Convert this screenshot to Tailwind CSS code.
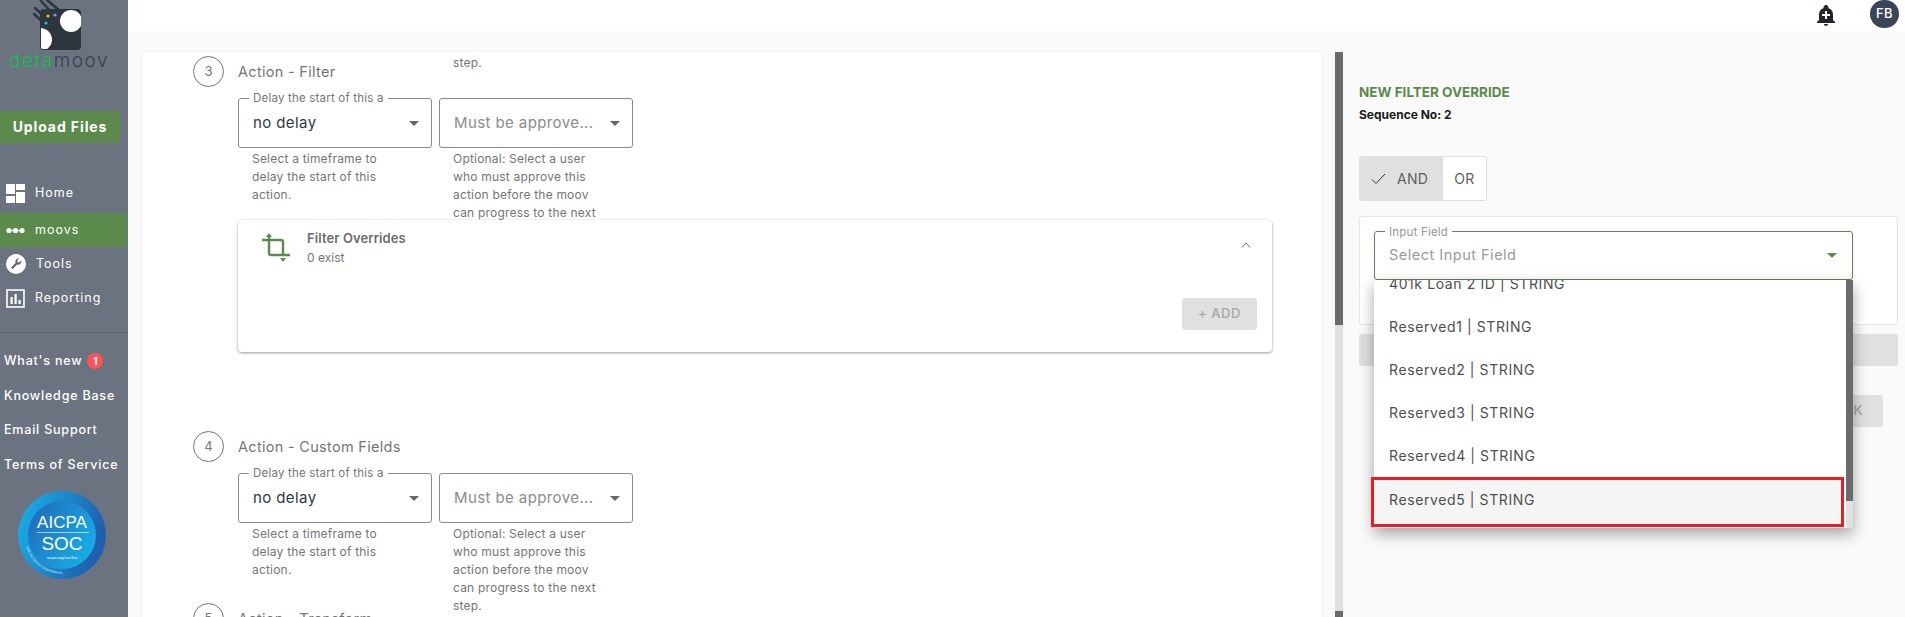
<!DOCTYPE html>
<html lang="en">
<head>
    <meta charset="UTF-8">
    <title>datamoov</title>
    <script src="https://cdn.jsdelivr.net/npm/@tailwindcss/browser@4"></script>
</head>
<body class="bg-[#fafafa] font-['Inter',sans-serif] h-[617px] w-[1905px] overflow-hidden flex text-[#757575]">
    <!-- Sidebar -->
    <aside class="w-[128px] shrink-0 h-full bg-[#6b7280] flex flex-col text-white">
        <div class="h-[74px] flex flex-col">
            <svg width="60" height="52" viewBox="0 0 60 52" class="ml-[21px]">
                <g stroke="#2d353d" stroke-width="2.5" stroke-linecap="round">
                    <path d="M14 8 L26 19"/><path d="M20 1 L32 14"/><path d="M26 0 L38 10"/><path d="M13 14 L24 24"/>
                </g>
                <rect x="19" y="9" width="41" height="41" rx="4" fill="#2d353d"/>
                <circle cx="50" cy="21" r="11" fill="#fff"/>
                <path d="M20 28 A12 12 0 0 1 31 40 A12 12 0 0 1 26 49 L22 49 Q20 49 20 47 Z" fill="#fff"/>
                <circle cx="27" cy="16" r="1.6" fill="#f5c518"/>
                <circle cx="34" cy="15" r="1.6" fill="#8f8fe8"/>
                <circle cx="25" cy="23" r="1.6" fill="#14c8c0"/>
            </svg>
            <div class="ml-[9px] text-[19px] leading-[20px] font-light tracking-[1.5px] -mt-[1px]"><span class="text-[#0fc04e]">deta</span><span class="text-[#39424c]">moov</span></div>
        </div>
        <button class="mt-[37px] h-[32px] w-[120px] pb-[2px] bg-[#5b8a4c] rounded-r-[3px] text-[14px] font-bold tracking-[0.9px] text-center">Upload Files</button>

        <nav class="mt-[33px] flex flex-col text-[12.5px] tracking-[1px]">
            <a class="h-[34px] flex items-center gap-[10px] pl-[6px]">
                <svg width="19" height="19" viewBox="0 0 19 19" fill="#fff"><rect width="9" height="10"/><rect x="10" width="9" height="6"/><rect y="12" width="9" height="7"/><rect x="10" y="8" width="9" height="11"/></svg>
                Home
            </a>
            <a class="mt-[3px] h-[34px] flex items-center gap-[10px] pl-[6px] bg-[#5b8a4c] rounded-r-[3px] w-[127px]">
                <svg width="19" height="19" viewBox="0 0 19 19" fill="#fff"><circle cx="3" cy="9.5" r="2.6"/><circle cx="9.5" cy="9.5" r="2.6"/><circle cx="16" cy="9.5" r="2.6"/><rect x="2" y="9" width="15" height="1"/></svg>
                moovs
            </a>
            <a class="h-[34px] flex items-center gap-[10px] pl-[6px]">
                <svg width="20" height="20" viewBox="0 0 20 20"><circle cx="10" cy="10" r="10" fill="#fff"/><path d="M12.5 4.6a3.2 3.2 0 0 0-3 4.3L5 13.4 6.6 15l4.5-4.5a3.2 3.2 0 0 0 4.2-3.9l-2 2-1.7-.4-.4-1.7 2-2a3 3 0 0 0-.7-.0z" fill="#5f6672"/></svg>
                Tools
            </a>
            <a class="h-[34px] flex items-center gap-[10px] pl-[6px]">
                <svg width="19" height="19" viewBox="0 0 19 19"><rect x="1" y="1" width="17" height="17" fill="none" stroke="#fff" stroke-width="1.6"/><rect x="4.5" y="8" width="2.2" height="7" fill="#fff"/><rect x="8.5" y="5" width="2.2" height="10" fill="#fff"/><rect x="12.5" y="11" width="2.2" height="4" fill="#fff"/></svg>
                Reporting
            </a>
        </nav>
        <div class="mt-[17px] h-px bg-[#596070] w-full"></div>
        <div class="mt-[11px] flex flex-col pl-[4px] text-[12.5px] font-medium tracking-[0.8px] leading-[34.5px] whitespace-nowrap">
            <a class="flex items-center gap-[5px]">What's new <span class="w-[16px] h-[16px] rounded-full bg-[#ff5252] text-[10px] font-bold leading-[16px] text-center tracking-normal">1</span></a>
            <a>Knowledge Base</a>
            <a>Email Support</a>
            <a>Terms of Service</a>
        </div>
        <svg width="90" height="90" viewBox="0 0 90 90" class="mt-[9px] ml-[18px]">
            <defs>
                <linearGradient id="ring" x1="0" y1="0" x2="1" y2="0.3"><stop offset="0" stop-color="#19b3ea"/><stop offset="1" stop-color="#1f5fae"/></linearGradient>
                <linearGradient id="core" x1="0" y1="0" x2="1" y2="0.6"><stop offset="0" stop-color="#2166b5"/><stop offset="1" stop-color="#17ace6"/></linearGradient>
                <path id="arc" d="M8 56 A37.500 37.500 0 0 0 72 70"/>
            </defs>
            <circle cx="44" cy="44" r="44" fill="url(#ring)"/>
            <circle cx="44" cy="44" r="34" fill="url(#core)"/>
            <text x="44" y="37" text-anchor="middle" font-family="Liberation Sans" font-size="17" fill="#fff">AICPA</text>
            <rect x="19" y="41" width="52" height="0.6" fill="#fff"/>
            <text x="44" y="59" text-anchor="middle" font-family="Liberation Sans" font-size="19" fill="#fff">SOC</text>
            <text x="44" y="68" text-anchor="middle" font-family="Liberation Sans" font-size="4" fill="#fff">aicpa.org/soc4so</text>
            <text font-family="Liberation Sans" font-size="3.500" fill="#d8eefa"><textPath href="#arc">SOC for Service Organizations</textPath></text>
        </svg>
    </aside>

    <div class="flex-1 min-w-0 flex flex-col h-full">
        <!-- Top bar -->
        <header class="h-[31px] shrink-0 bg-white flex justify-end items-start pr-[6px]">
            <svg width="24" height="24" viewBox="0 0 24 24" class="mt-[3px]"><path d="M12 23c1.1 0 2-.9 2-2h-4c0 1.100.9 2 2 2zm7-6v-5.500c0-3.100-1.700-5.600-4.500-6.300V4.500c0-.8-.7-1.500-1.500-2.500h-2c-.8 1-1.500 1.700-1.500 2.500v.7C6.700 5.900 5 8.400 5 11.500V17l-2 2v1h18v-1l-2-2z" fill="#22262b"/><rect x="8" y="11" width="8" height="2" fill="#fff"/><rect x="11" y="8" width="2" height="8" fill="#fff"/></svg>
            <div class="ml-[32px] w-[29px] h-[28px] rounded-full bg-[#3b4558] text-white text-[13px] font-medium flex items-center justify-center tracking-[0.5px]">FB</div>
        </header>

        <div class="flex-1 min-h-0 flex pt-[21px]">
            <!-- Main form card -->
            <main class="ml-[14px] w-[1180px] shrink-0 bg-white overflow-hidden pt-[4px] shadow-[0_0_2px_rgba(0,0,0,0.08)]">
                <div class="h-0 -mt-[2px] pl-[311px] text-[12px] leading-[18px] tracking-[0.2px]">step.</div>

                <!-- Step 3 -->
                <section class="pl-[51px] mt-[2px]">
                    <div class="flex items-center gap-[14px] h-[31px]">
                        <div class="w-[31px] h-[31px] rounded-full border border-[#757575] flex items-center justify-center text-[13px]">3</div>
                        <h3 class="text-[14.5px] tracking-[0.3px]">Action - Filter</h3>
                    </div>
                    <div class="ml-[45px] mt-[11px] flex gap-[7px]">
                        <div class="w-[194px]">
                            <div class="relative h-[50px] border border-[#8a8a8a] rounded-[3px] flex items-center justify-between pl-[14px] pr-[12px]">
                                <span class="absolute -top-[8px] left-[10px] bg-white px-[4px] text-[11.5px] leading-[14px] tracking-[0.2px]">Delay the start of this a</span>
                                <span class="text-[15px] text-[#2f3a45] tracking-[0.4px]">no delay</span>
                                <span class="w-0 h-0 border-x-[5px] border-x-transparent border-t-[5px] border-t-[#666]"></span>
                            </div>
                            <p class="mt-[2px] pl-[14px] pr-[30px] h-[70px] text-[12px] leading-[18px] tracking-[0.2px]">Select a timeframe to delay the start of this action.</p>
                        </div>
                        <div class="w-[194px]">
                            <div class="h-[50px] border border-[#8a8a8a] rounded-[3px] flex items-center justify-between pl-[14px] pr-[12px]">
                                <span class="text-[15px] text-[#8c8c8c] tracking-[0.4px]">Must be approve...</span>
                                <span class="w-0 h-0 border-x-[5px] border-x-transparent border-t-[5px] border-t-[#666]"></span>
                            </div>
                            <p class="mt-[2px] pl-[14px] pr-[30px] h-[70px] overflow-hidden text-[12px] leading-[18px] tracking-[0.2px]">Optional: Select a user who must approve this action before the moov can progress to the next step.</p>
                        </div>
                    </div>
                    <div class="ml-[45px] w-[1034px] h-[132px] bg-white rounded-[4px] shadow-[0_1px_3px_rgba(0,0,0,0.4)] relative flex flex-col">
                        <div class="flex items-start pt-[13px] pl-[24px] pr-[20px]">
                            <svg width="28" height="29" viewBox="0 0 28 29" fill="none" stroke="#5b8a4c" stroke-width="2.4">
                                <path d="M0 7 H19 Q21 7 21 9 V21"/>
                                <path d="M7 3 V20 Q7 22 9 22 H28"/>
                                <path d="M4 4 L7 0 L10 4 Z" fill="#5b8a4c" stroke="none"/>
                                <path d="M18 25 L21 29 L24 25 Z" fill="#5b8a4c" stroke="none"/>
                            </svg>
                            <div class="ml-[17px] -mt-[4px]">
                                <div class="text-[13px] leading-[18px] font-semibold text-[#6b6b6b] tracking-[0.1px]">Filter Overrides</div>
                                <div class="text-[12px] leading-[18px] mt-[2px]">0 exist</div>
                            </div>
                            <svg width="10" height="6" viewBox="0 0 10 6" fill="none" stroke="#666" class="ml-auto mt-[9px] mr-[1px]"><path d="M1 5.500 L5 1 L9 5.500"/></svg>
                        </div>
                        <button class="absolute right-[15px] bottom-[22px] w-[75px] h-[32px] bg-[#e0e0e0] rounded-[3px] text-[#a8a8a8] text-[13px] font-medium tracking-[0.6px]">+ ADD</button>
                    </div>
                </section>

                <!-- Step 4 -->
                <section class="pl-[51px] mt-[79px]">
                    <div class="flex items-center gap-[14px] h-[31px]">
                        <div class="w-[31px] h-[31px] rounded-full border border-[#757575] flex items-center justify-center text-[13px]">4</div>
                        <h3 class="text-[14.5px] tracking-[0.3px]">Action - Custom Fields</h3>
                    </div>
                    <div class="ml-[45px] mt-[11px] flex gap-[7px]">
                        <div class="w-[194px]">
                            <div class="relative h-[50px] border border-[#8a8a8a] rounded-[3px] flex items-center justify-between pl-[14px] pr-[12px]">
                                <span class="absolute -top-[8px] left-[10px] bg-white px-[4px] text-[11.5px] leading-[14px] tracking-[0.2px]">Delay the start of this a</span>
                                <span class="text-[15px] text-[#2f3a45] tracking-[0.4px]">no delay</span>
                                <span class="w-0 h-0 border-x-[5px] border-x-transparent border-t-[5px] border-t-[#666]"></span>
                            </div>
                            <p class="mt-[2px] pl-[14px] pr-[30px] h-[78px] text-[12px] leading-[18px] tracking-[0.2px]">Select a timeframe to delay the start of this action.</p>
                        </div>
                        <div class="w-[194px]">
                            <div class="h-[50px] border border-[#8a8a8a] rounded-[3px] flex items-center justify-between pl-[14px] pr-[12px]">
                                <span class="text-[15px] text-[#8c8c8c] tracking-[0.4px]">Must be approve...</span>
                                <span class="w-0 h-0 border-x-[5px] border-x-transparent border-t-[5px] border-t-[#666]"></span>
                            </div>
                            <p class="mt-[2px] pl-[14px] pr-[30px] h-[78px] text-[12px] leading-[18px] tracking-[0.2px]">Optional: Select a user who must approve this action before the moov can progress to the next step.</p>
                        </div>
                    </div>
                </section>

                <!-- Step 5 -->
                <section class="pl-[51px]">
                    <div class="flex items-center gap-[14px] h-[31px]">
                        <div class="w-[31px] h-[31px] rounded-full border border-[#757575] flex items-center justify-center text-[13px]">5</div>
                        <h3 class="text-[14.5px] tracking-[0.3px]">Action - Transform</h3>
                    </div>
                </section>
            </main>

            <!-- Page scrollbar -->
            <div class="ml-[13px] w-[8px] shrink-0 h-full bg-[#e0e0e0] flex flex-col justify-between">
                <div class="h-[273px] bg-[#6b6b6b]"></div>
                <div class="h-[6px] bg-[#6b6b6b]"></div>
            </div>

            <!-- Right panel -->
            <section class="ml-[16px] w-[539px] shrink-0 pt-[32px]">
                <h2 class="text-[13.5px] leading-[16px] font-bold text-[#5b8a4c]">NEW FILTER OVERRIDE</h2>
                <p class="mt-[7px] text-[12px] leading-[16px] font-bold text-[#1a1a1a]">Sequence No: 2</p>
                <div class="mt-[33px] flex w-[128px] h-[45px] border border-[#e0e0e0] rounded-[3px] overflow-hidden text-[14px] tracking-[0.3px]">
                    <div class="w-[83px] bg-[#e0e0e0] flex items-center pl-[11px] gap-[11px] text-[#5f5f5f]">
                        <svg width="15" height="12" viewBox="0 0 15 12" fill="none" stroke="#333" stroke-width="1"><path d="M1 6.500 L5 10.500 L14 1"/></svg>
                        AND
                    </div>
                    <div class="flex-1 bg-white flex items-center justify-center text-[#5f5f5f]">OR</div>
                </div>
                <div class="mt-[15px] h-[109px] border border-[#e6e6e6] rounded-[3px] bg-white pt-[14px] pl-[14px]">
                    <div class="relative w-[479px] h-[49px] border border-[#5b8a4c] rounded-[3px] flex items-center justify-between pl-[14px] pr-[15px] z-10">
                        <span class="absolute -top-[6px] left-[10px] bg-white px-[4px] text-[11.5px] leading-[13px] text-[#8e9e8e] tracking-[0.2px]">Input Field</span>
                        <span class="text-[14.500px] text-[#9a9a9a] tracking-[0.5px] -mt-[1px]">Select Input Field</span>
                        <span class="w-0 h-0 border-x-[5px] border-x-transparent border-t-[5px] border-t-[#5b8a4c]"></span>

                        <!-- Dropdown menu -->
                        <div class="absolute -left-px top-[48px] w-[479px] h-[248px] bg-white flex shadow-[0_6px_14px_rgba(0,0,0,0.35)] text-[14px] tracking-[0.6px] text-[#4f4f4f]">
                            <ul class="w-[472px]">
                                <li class="h-[25px] overflow-hidden pl-[15px]"><div class="leading-[43px] -mt-[18px]">401k Loan 2 ID | STRING</div></li>
                                <li class="h-[43px] leading-[43px] pl-[15px]">Reserved1 | STRING</li>
                                <li class="h-[43px] leading-[43px] pl-[15px]">Reserved2 | STRING</li>
                                <li class="h-[43px] leading-[43px] pl-[15px]">Reserved3 | STRING</li>
                                <li class="h-[43px] leading-[43px] pl-[15px]">Reserved4 | STRING</li>
                                <li class="h-[50px] -ml-[3px] w-[473px] border-[3px] border-[#ed1c24] bg-[#f5f5f5] leading-[40px] pl-[15px]">Reserved5 | STRING</li>
                            </ul>
                            <div class="w-[7px] flex flex-col bg-[#e0e0e0]">
                                <div class="h-[221px] bg-[#6b6b6b]"></div>
                            </div>
                        </div>
                    </div>
                </div>
                <div class="mt-[9px] h-[32px] bg-[#e0e0e0] rounded-[3px]"></div>
                <div class="mt-[29px] flex justify-end pr-[15px]">
                    <button class="w-[60px] h-[32px] bg-[#e0e0e0] rounded-[3px] text-[#a8a8a8] text-[13px] font-medium tracking-[0.6px]">OK</button>
                </div>
            </section>
        </div>
    </div>
</body>
</html>
